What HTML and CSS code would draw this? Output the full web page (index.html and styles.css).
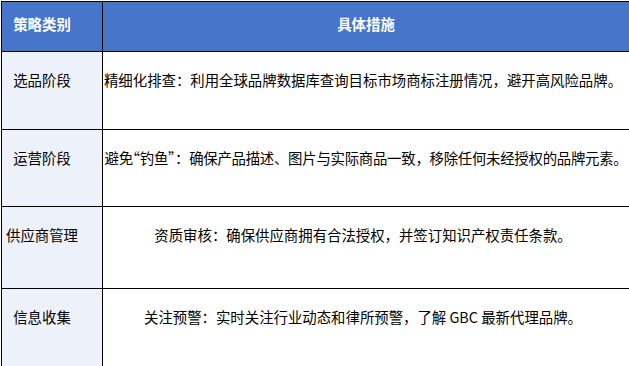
FILE: index.html
```html
<!DOCTYPE html>
<html lang="zh-CN">
<head>
    <meta charset="UTF-8">
    <meta name="viewport" content="width=device-width, initial-scale=1">
    <link rel="stylesheet" href="styles.css">
    <title>策略类别</title>
</head>
<body>
<table class="plan">
    <colgroup>
        <col class="col-type">
        <col class="col-detail">
    </colgroup>
    <tr class="head-row">
        <th class="type">策略类别</th>
        <th class="detail">具体措施</th>
    </tr>
    <tr class="row row1">
        <td class="type">选品阶段</td>
        <td class="detail">精细化排查：利用全球品牌数据库查询目标市场商标注册情况，避开高风险品牌。</td>
    </tr>
    <tr class="row row2">
        <td class="type">运营阶段</td>
        <td class="detail tight">避免<span class="quote">“</span>钓鱼<span class="quote">”</span>：确保产品描述、图片与实际商品一致，移除任何未经授权的品牌元素。</td>
    </tr>
    <tr class="row row3">
        <td class="type">供应商管理</td>
        <td class="detail">资质审核：确保供应商拥有合法授权，并签订知识产权责任条款。</td>
    </tr>
    <tr class="row row4">
        <td class="type">信息收集</td>
        <td class="detail">关注预警：实时关注行业动态和律所预警，了解 GBC 最新代理品牌。</td>
    </tr>
</table>
</body>
</html>
```

FILE: styles.css
```css
body {
    margin: 0;
    background: #ffffff;
    font-family: "Noto Sans CJK SC", "Noto Sans", sans-serif;
    font-size: 14.4px;
    color: #000000;
}
.plan {
    margin: 1px 0 0 1px;
    width: 628px;
    border-collapse: collapse;
    table-layout: fixed;
}
.col-type {
    width: 101px;
}
.col-detail {
    width: 527px;
}
.plan th,
.plan td {
    border: 1px solid #000000;
    line-height: 20px;
    white-space: nowrap;
    overflow: hidden;
    vertical-align: top;
}
.head-row th {
    height: 50px;
    padding: 12px 0 0 0;
    box-sizing: border-box;
    background-color: #4775c9;
    color: #ffffff;
    font-weight: bold;
    text-align: center;
}
.head-row .type {
    padding-right: 20px;
}
.row td {
    padding: 18px 6px 0 0;
    box-sizing: border-box;
    text-align: center;
}
.row .type {
    background-color: #edf1f9;
    padding-right: 20px;
}
.row .tight {
    padding: 18px 0 0 0;
    letter-spacing: -0.25px;
}
.quote {
    font-feature-settings: "halt";
}
.row1 td { height: 78px; }
.row2 td { height: 77px; }
.row3 td { height: 82px; }
.row4 td { height: 80px; }
```
